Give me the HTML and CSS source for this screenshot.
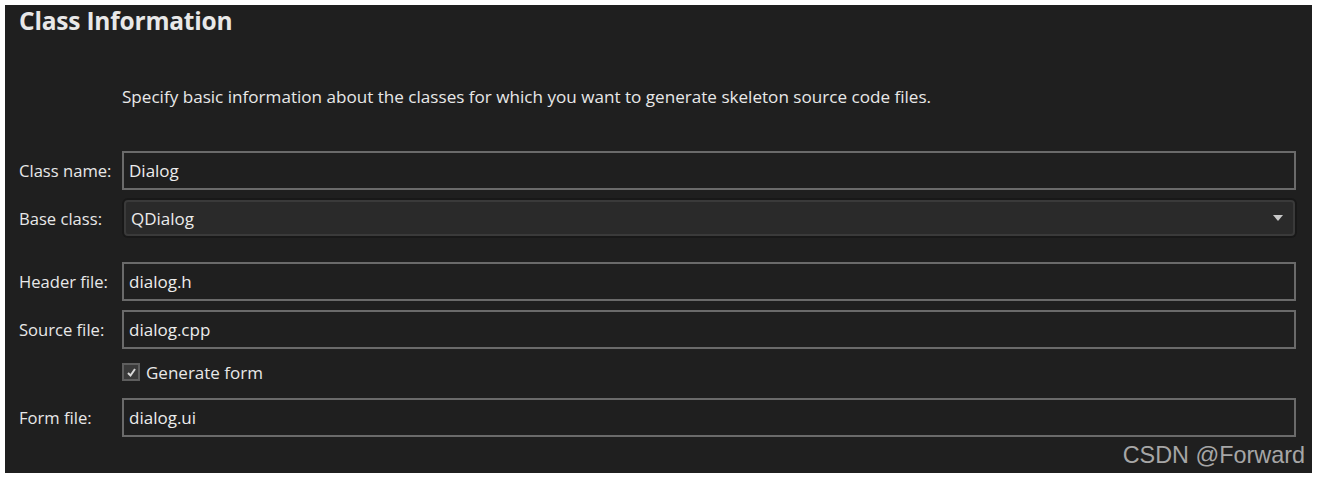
FILE: index.html
```html
<!DOCTYPE html>
<html>
<head>
<meta charset="utf-8">
<link rel="stylesheet" href="styles.css">
</head>
<body>
<div class="panel">
  <h1 class="title">Class Information</h1>
  <p class="desc">Specify basic information about the classes for which you want to generate skeleton source code files.</p>
  <div class="form">
    <div class="row r1">
      <label class="lbl">Class name:</label>
      <div class="field"><span>Dialog</span></div>
    </div>
    <div class="row r2">
      <label class="lbl">Base class:</label>
      <div class="combo"><span>QDialog</span><span class="arrow"></span></div>
    </div>
    <div class="row r3">
      <label class="lbl">Header file:</label>
      <div class="field"><span>dialog.h</span></div>
    </div>
    <div class="row r4">
      <label class="lbl">Source file:</label>
      <div class="field"><span>dialog.cpp</span></div>
    </div>
    <div class="row rc">
      <div class="lbl"></div>
      <div class="check">
        <span class="box"><svg width="11" height="11" viewBox="0 0 11 11"><path d="M2 6 L4.5 8.5 L9 2" fill="none" stroke="#d8d8d8" stroke-width="2"/></svg></span>
        <span>Generate form</span>
      </div>
    </div>
    <div class="row r5">
      <label class="lbl">Form file:</label>
      <div class="field"><span>dialog.ui</span></div>
    </div>
  </div>
  <div class="wm">CSDN @Forward</div>
</div>
</body>
</html>
```

FILE: styles.css
```css
html, body {
  margin: 0;
  padding: 0;
  background: #ffffff;
}
body {
  width: 1319px;
  height: 478px;
  overflow: hidden;
}
.panel {
  margin: 5px 7px 5px 5px;
  width: 1307px;
  height: 468px;
  background: #1f1f1f;
  box-sizing: border-box;
  padding: 0 16px 0 14px;
  font-family: "Open Sans", "Noto Sans", sans-serif;
  color: #e8e8e8;
  display: flex;
  flex-direction: column;
}
.title {
  margin: 1px 0 0 0;
  font-size: 24.5px;
  font-weight: 700;
  line-height: 30px;
  letter-spacing: -0.2px;
}
.desc {
  margin: 49px 0 0 103px;
  font-size: 17.1px;
  line-height: 24px;
}
.form {
  margin-top: 42px;
  display: flex;
  flex-direction: column;
}
.row {
  display: flex;
  align-items: center;
}
.lbl {
  width: 103px;
  flex: none;
  font-size: 16.6px;
}
.field {
  flex: 1;
  height: 39px;
  box-sizing: border-box;
  border: 2px solid #6a6a6a;
  display: flex;
  align-items: center;
  padding-left: 5px;
  font-size: 17px;
  color: #ececec;
}
.combo {
  flex: 1;
  height: 36px;
  margin: 0 1px 0 2px;
  box-sizing: border-box;
  border: 2px solid #3a3a3a;
  border-radius: 4px;
  background: #2a2a2a;
  box-shadow: 0 0 0 2px #181818;
  display: flex;
  align-items: center;
  justify-content: space-between;
  padding: 0 10px 0 5px;
  font-size: 17px;
  color: #ececec;
}
.arrow {
  width: 0;
  height: 0;
  border-left: 5px solid transparent;
  border-right: 5px solid transparent;
  border-top: 6px solid #c8c8c8;
}
.r2 { margin-top: 10px; }
.r3 { margin-top: 26px; }
.r4 { margin-top: 9px; }
.rc { margin-top: 14px; height: 18px; }
.r5 { margin-top: 17px; }
.check {
  display: flex;
  align-items: center;
  gap: 6px;
  font-size: 17px;
}
.box {
  width: 18px;
  height: 18px;
  box-sizing: border-box;
  border: 2px solid #5e5e5e;
  background: #3a3a3a;
  display: flex;
  align-items: center;
  justify-content: center;
}
.wm {
  margin-top: 5px;
  align-self: flex-end;
  margin-right: -9px;
  font-family: "Liberation Sans", Arial, sans-serif;
  font-size: 23.4px;
  line-height: 27px;
  color: #a6a6a6;
}
```
